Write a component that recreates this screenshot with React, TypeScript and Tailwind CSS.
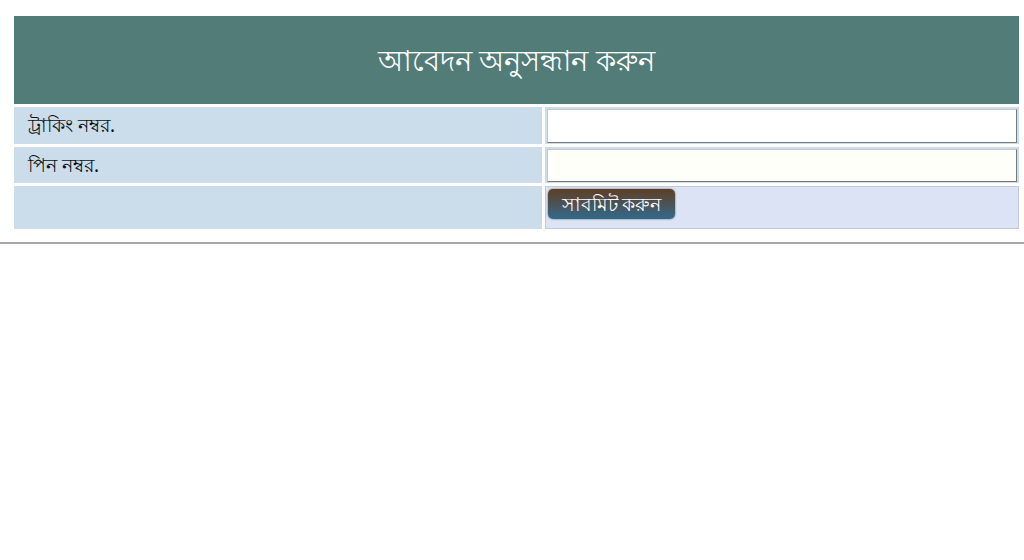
export default function App() {
    return (
        <div className="w-[1024px] h-[560px] bg-white pt-[13px] font-['Noto_Sans',sans-serif]">
            <div className="ml-[11px] mr-[2px]">
                <table className="w-full border-separate border-spacing-[3px]">
                    <tbody>
                        <tr>
                            <td colSpan={2} className="h-[88px] bg-[#527c78] text-center text-white text-[29px] font-medium p-0">
                                আবেদন অনুসন্ধান করুন
                            </td>
                        </tr>
                        <tr>
                            <td className="w-[528px] h-[37px] bg-[#cbdcea] pl-[14px] text-[19px] text-[#111] p-0">
                                ট্রাকিং নম্বর.
                            </td>
                            <td className="h-[37px] bg-[#cbdcea] p-0">
                                <div className="flex h-full items-center px-[2px]">
                                    <input type="text" className="w-full h-[34px] bg-white border border-[#7a7a7a] border-t-[#c8c8c8] border-l-[#c8c8c8] outline-none" />
                                </div>
                            </td>
                        </tr>
                        <tr>
                            <td className="h-[36px] bg-[#cbdcea] pl-[14px] text-[19px] text-[#111] p-0">
                                পিন নম্বর.
                            </td>
                            <td className="h-[36px] bg-[#cbdcea] p-0">
                                <div className="flex h-full items-center px-[2px]">
                                    <input type="text" className="w-full h-[33px] bg-[#fffffa] border border-[#7a7a7a] border-t-[#c8c8c8] border-l-[#c8c8c8] outline-none" />
                                </div>
                            </td>
                        </tr>
                        <tr>
                            <td className="h-[43px] bg-[#cbdcea] p-0"></td>
                            <td className="h-[43px] bg-[#dbe3f4] border border-[#c4c8dc] p-0 align-top">
                                <div className="pt-[2px] pl-[2px]">
                                    <button className="h-[30px] w-[127px] rounded-[5px] bg-gradient-to-b from-[#5e3d20] via-[#4a5258] to-[#2c6a8c] text-white text-[19px] font-medium leading-none shadow-[0_0_2px_#555]">
                                        সাবমিট করুন
                                    </button>
                                </div>
                            </td>
                        </tr>
                    </tbody>
                </table>
            </div>
            <div className="mt-[10px] h-[2px] bg-[#a8a8a8]"></div>
        </div>
    );
}
